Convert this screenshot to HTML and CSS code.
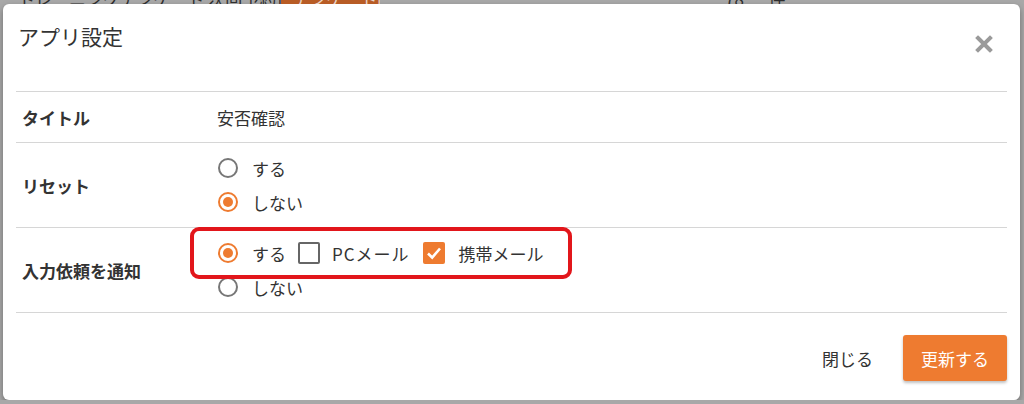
FILE: index.html
```html
<!DOCTYPE html>
<html lang="ja">
<head>
  <meta charset="UTF-8">
  <title>アプリ設定</title>
  <link rel="stylesheet" href="styles.css">
</head>
<body>
  <div class="behind">
    <div class="behind-line">
      <span class="behind-text">トレーニングアンケート 次回予約日</span>
      <span class="behind-badge">アンケート回答</span>
      <span class="behind-count">78 ー 件</span>
    </div>
  </div>

  <div class="dialog">
    <div class="dialog-header">
      <h2 class="dialog-title">アプリ設定</h2>
      <button class="close-btn" aria-label="閉じる">
        <svg width="18" height="18" viewBox="0 0 18 18">
          <path d="M3 3 L15 15 M15 3 L3 15" stroke="#9a9a9a" stroke-width="4" stroke-linecap="square"/>
        </svg>
      </button>
    </div>

    <div class="settings">
      <div class="row row-title">
        <div class="label">タイトル</div>
        <div class="value">安否確認</div>
      </div>

      <div class="row">
        <div class="label">リセット</div>
        <div class="value">
          <div class="option"><span class="radio"></span>する</div>
          <div class="option"><span class="radio checked"></span>しない</div>
        </div>
      </div>

      <div class="row">
        <div class="label">入力依頼を通知</div>
        <div class="value notify">
          <div class="option">
            <span class="radio checked"></span>する
            <span class="checkbox"></span><span class="pc">PCメール</span>
            <span class="checkbox checked">
              <svg width="22" height="22" viewBox="0 0 22 22">
                <path d="M5 11.5 L9.2 15.5 L17 6.5" fill="none" stroke="#fff" stroke-width="2.6"/>
              </svg>
            </span>携帯メール
          </div>
          <div class="option"><span class="radio"></span>しない</div>
          <div class="highlight"></div>
        </div>
      </div>
    </div>

    <div class="dialog-footer">
      <button class="text-btn">閉じる</button>
      <button class="primary-btn">更新する</button>
    </div>
  </div>
</body>
</html>
```

FILE: styles.css
```css
body { margin: 0; background: #a8a8a8; font-family: "Noto Sans CJK JP", "Noto Sans", sans-serif; color: #333; overflow: hidden; }

.behind { height: 4px; overflow: hidden; }
.behind-line { display: flex; align-items: center; margin-top: -14px; height: 24px; font-size: 17px; color: #2e2e2e; white-space: nowrap; }
.behind-text { margin-left: 18px; width: 263px; overflow: hidden; }
.behind-badge { background: #b85c25; color: #e9d3c5; padding: 0 12px; width: 75px; overflow: hidden; }
.behind-count { margin-left: 345px; }

.dialog { margin: 0 4px 0 3px; height: 396px; background: #fff; border-radius: 6px; padding: 0 13px; box-sizing: border-box; box-shadow: 0 3px 6px rgba(0,0,0,0.35); }

.dialog-header { display: flex; justify-content: space-between; align-items: flex-start; height: 87px; border-bottom: 1px solid #d6d6d6; }
.dialog-title { margin: 17px 0 0 2px; font-size: 21px; font-weight: normal; line-height: 30px; color: #333; }
.close-btn { margin: 31px 14px 0 0; padding: 0; border: none; background: none; width: 18px; height: 18px; }
.close-btn svg { display: block; }

.row { display: grid; grid-template-columns: 201px 1fr; align-items: center; border-bottom: 1px solid #d6d6d6; padding: 8px 0; height: 85px; box-sizing: border-box; font-size: 17px; }
.row-title { height: 51px; padding: 0; }
.label { padding-left: 6px; font-weight: bold; }
.value { position: relative; }

.option { display: flex; align-items: center; height: 34px; }
.radio { width: 20px; height: 20px; box-sizing: border-box; border: 2.5px solid #777; border-radius: 50%; margin: 0 14px 0 1px; display: flex; align-items: center; justify-content: center; }
.radio.checked { border-color: #ee7b30; }
.radio.checked::after { content: ""; width: 10px; height: 10px; border-radius: 50%; background: #ee7b30; }

.checkbox { width: 22px; height: 22px; box-sizing: border-box; border: 2.5px solid #666; border-radius: 2px; margin: 0 12px 0 12px; }
.checkbox.checked { border: none; background: #ee7b30; margin-left: 13px; margin-right: 14px; }
.checkbox svg { display: block; }
.pc { letter-spacing: 1px; }

.highlight { position: absolute; left: -27px; top: -9px; width: 382px; height: 52px; box-sizing: border-box; border: 4px solid #e2161b; border-radius: 9px; }

.dialog-footer { display: flex; justify-content: flex-end; align-items: center; height: 86px; padding-top: 4px; box-sizing: border-box; }
.text-btn { border: none; background: none; font: inherit; font-size: 17px; color: #333; padding: 0; margin-right: 30px; }
.primary-btn { border: none; background: #ee7b30; color: #fff; font: inherit; font-size: 17px; width: 104px; height: 46px; border-radius: 3px; box-shadow: 0 2px 3px rgba(0,0,0,0.25); }
```
